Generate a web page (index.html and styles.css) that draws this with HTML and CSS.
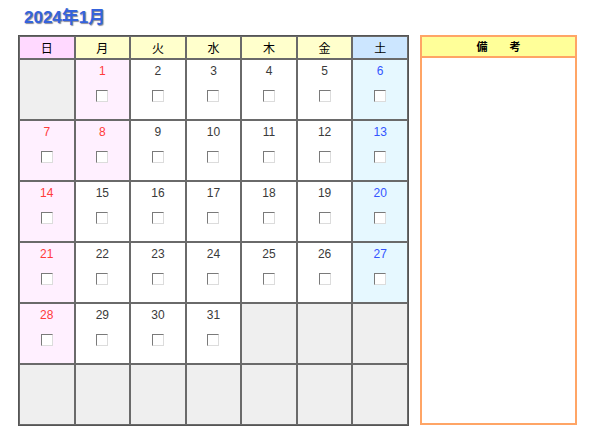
FILE: index.html
```html
<!DOCTYPE html>
<html lang="ja">
<head>
<meta charset="utf-8">
<link rel="stylesheet" href="styles.css">
</head>
<body>
<h1 class="title">2024年1月</h1>
<div class="wrap">
  <table class="cal">
    <thead>
      <tr>
        <th class="h-sun">日</th><th class="h-wd">月</th><th class="h-wd">火</th><th class="h-wd">水</th><th class="h-wd">木</th><th class="h-wd">金</th><th class="h-sat">土</th>
      </tr>
    </thead>
    <tbody>
      <tr>
        <td class="empty"></td>
        <td class="hol"><div class="num red">1</div><span class="cb"></span></td>
        <td><div class="num">2</div><span class="cb"></span></td>
        <td><div class="num">3</div><span class="cb"></span></td>
        <td><div class="num">4</div><span class="cb"></span></td>
        <td><div class="num">5</div><span class="cb"></span></td>
        <td class="sat"><div class="num blue">6</div><span class="cb"></span></td>
      </tr>
      <tr>
        <td class="sun"><div class="num red">7</div><span class="cb"></span></td>
        <td class="hol"><div class="num red">8</div><span class="cb"></span></td>
        <td><div class="num">9</div><span class="cb"></span></td>
        <td><div class="num">10</div><span class="cb"></span></td>
        <td><div class="num">11</div><span class="cb"></span></td>
        <td><div class="num">12</div><span class="cb"></span></td>
        <td class="sat"><div class="num blue">13</div><span class="cb"></span></td>
      </tr>
      <tr>
        <td class="sun"><div class="num red">14</div><span class="cb"></span></td>
        <td><div class="num">15</div><span class="cb"></span></td>
        <td><div class="num">16</div><span class="cb"></span></td>
        <td><div class="num">17</div><span class="cb"></span></td>
        <td><div class="num">18</div><span class="cb"></span></td>
        <td><div class="num">19</div><span class="cb"></span></td>
        <td class="sat"><div class="num blue">20</div><span class="cb"></span></td>
      </tr>
      <tr>
        <td class="sun"><div class="num red">21</div><span class="cb"></span></td>
        <td><div class="num">22</div><span class="cb"></span></td>
        <td><div class="num">23</div><span class="cb"></span></td>
        <td><div class="num">24</div><span class="cb"></span></td>
        <td><div class="num">25</div><span class="cb"></span></td>
        <td><div class="num">26</div><span class="cb"></span></td>
        <td class="sat"><div class="num blue">27</div><span class="cb"></span></td>
      </tr>
      <tr>
        <td class="sun"><div class="num red">28</div><span class="cb"></span></td>
        <td><div class="num">29</div><span class="cb"></span></td>
        <td><div class="num">30</div><span class="cb"></span></td>
        <td><div class="num">31</div><span class="cb"></span></td>
        <td class="empty"></td>
        <td class="empty"></td>
        <td class="empty"></td>
      </tr>
      <tr>
        <td class="empty"></td><td class="empty"></td><td class="empty"></td><td class="empty"></td><td class="empty"></td><td class="empty"></td><td class="empty"></td>
      </tr>
    </tbody>
  </table>
  <div class="memo">
    <div class="memo-head">備　　考</div>
  </div>
</div>
</body>
</html>
```
FILE: styles.css
```css
html, body {
  margin: 0;
  padding: 0;
  background: #fff;
  font-family: "Liberation Sans", Arial, "Noto Sans CJK JP", sans-serif;
}
.title {
  margin: 0;
  padding: 7px 0 0 24px;
  height: 29px;
  box-sizing: border-box;
  font-size: 17px;
  line-height: 22px;
  font-weight: bold;
  color: #3463dc;
  text-shadow: 1px 1px 1px #8a8a9a;
  font-family: "Liberation Sans", "Noto Sans CJK JP", sans-serif;
}
.wrap {
  display: flex;
  align-items: flex-start;
  padding: 6px 0 0 18px;
  gap: 11px;
}
.cal {
  width: 391px;
  table-layout: fixed;
  border-collapse: separate;
  border-spacing: 0;
  border: 1px solid #555;
}
.cal th, .cal td {
  border: 1px solid #6a6a6a;
  padding: 0;
  text-align: center;
}
.cal th {
  height: 21px;
  font-size: 12px;
  font-weight: normal;
  color: #000;
  font-family: "Noto Sans CJK JP", sans-serif;
  line-height: 21px;
}
.h-sun { background: #ffd9ff; }
.h-wd { background: #ffffcc; }
.h-sat { background: #cce6ff; }
.cal td {
  height: 59px;
  vertical-align: top;
  background: #fff;
}
.cal td.sun, .cal td.hol { background: #fff0ff; }
.cal td.sat { background: #e6f8ff; }
.cal td.empty { background: #efefef; }
.num {
  font-size: 12px;
  line-height: 15px;
  padding-top: 4px;
  color: #3a3a3a;
}
.num.red { color: #ff3b3b; }
.num.blue { color: #3355ff; }
.cb {
  display: block;
  margin: 11px auto 0;
  width: 10px;
  height: 10px;
  border: 1px solid;
  border-color: #7a7a7a #dcdcdc #dcdcdc #7a7a7a;
  background: #fff;
}
.memo {
  width: 153px;
  height: 386px;
  border: 2px solid #ffa566;
  background: #fff;
}
.memo-head {
  height: 19px;
  line-height: 19px;
  background: #ffff99;
  border-bottom: 2px solid #ffa566;
  text-align: center;
  font-size: 11px;
  font-weight: bold;
  font-family: "Noto Sans CJK JP", sans-serif;
  color: #000;
}
```
